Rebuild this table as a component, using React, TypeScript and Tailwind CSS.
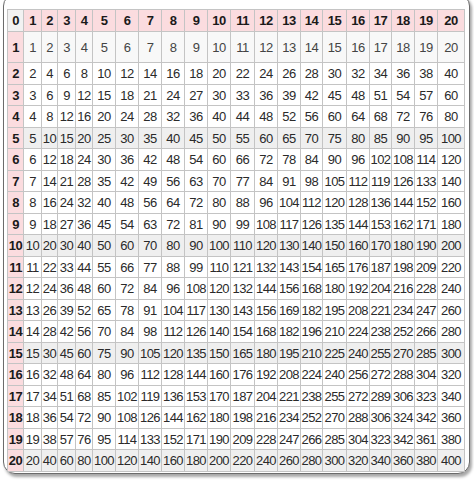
import React from 'react';

const colWidths = [16, 18, 16, 18, 17, 23, 23, 23, 23, 23, 23, 24, 23, 23, 22, 24, 23, 22, 23, 23, 27];
const nums = Array.from({ length: 21 }, (_, i) => i);

function rowHeight(r: number) {
  if (r === 0) return 'h-[22px]';
  if (r === 1) return 'h-[31px]';
  return r % 2 === 0 ? 'h-[22px]' : 'h-[21px]';
}

export default function App() {
  return (
    <div className="w-[474px] h-[481px] bg-white overflow-hidden" style={{ fontFamily: '"Liberation Sans", Arial, sans-serif' }}>
      <div className="ml-[3px] mt-[-6px] w-[467px] h-[480px] rounded-[12px] border border-[#6b6b6b] bg-white shadow-[2px_3px_3px_rgba(0,0,0,0.35)]">
        <table className="ml-[3px] mt-[14px] table-fixed border-collapse w-[457px] text-[13px] tracking-[-0.6px] leading-none">
          <colgroup>
            {colWidths.map((w, i) => (
              <col key={i} style={{ width: w }} />
            ))}
          </colgroup>
          <tbody>
            {nums.map((r) => (
              <tr key={r} className={rowHeight(r)}>
                {nums.map((c) => {
                  const isHead = r === 0 || c === 0;
                  const corner = r === 0 && c === 0;
                  const shaded = r > 0 && r % 5 === 0;
                  let cls = 'border border-[#c4c4c4] text-center p-0 whitespace-nowrap ';
                  if (corner) cls += 'bg-[#f2f2f2] font-bold text-[#1a1a1a]';
                  else if (isHead) cls += 'bg-[#fbdcdf] font-bold text-[#1a1a1a]';
                  else if (shaded) cls += 'bg-[#efefef] text-[#2a2a2a]';
                  else if (r === 1) cls += 'bg-[#f8f8f8] text-[#444]';
                  else cls += 'bg-white text-[#2a2a2a]';
                  return (
                    <td key={c} className={cls}>
                      {r === 0 ? c : c === 0 ? r : r * c}
                    </td>
                  );
                })}
              </tr>
            ))}
          </tbody>
        </table>
      </div>
    </div>
  );
}
